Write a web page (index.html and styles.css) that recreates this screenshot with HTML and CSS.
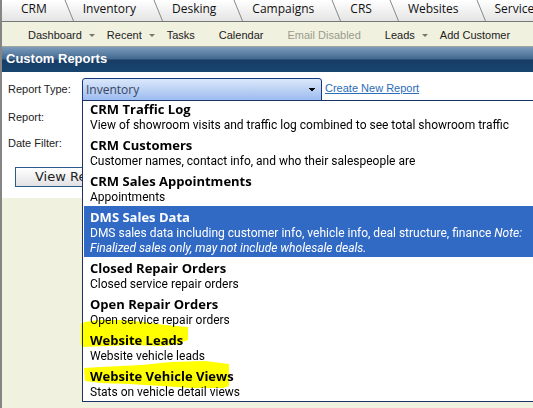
FILE: index.html
```
<!DOCTYPE html>
<html lang="en">
<head>
<meta charset="utf-8">
<title>Custom Reports</title>
<link rel="stylesheet" href="styles.css">
</head>
<body>
<nav class="tabs">
  <a class="tab" href="#">CRM</a>
  <a class="tab" href="#"><svg class="slant" viewBox="0 0 10 21"><path d="M1 0 9.500 21"/></svg>Inventory</a>
  <a class="tab" href="#"><svg class="slant" viewBox="0 0 10 21"><path d="M1 0 9.500 21"/></svg>Desking</a>
  <a class="tab" href="#"><svg class="slant" viewBox="0 0 10 21"><path d="M1 0 9.500 21"/></svg>Campaigns</a>
  <a class="tab" href="#"><svg class="slant" viewBox="0 0 10 21"><path d="M1 0 9.500 21"/></svg>CRS</a>
  <a class="tab" href="#"><svg class="slant" viewBox="0 0 10 21"><path d="M1 0 9.500 21"/></svg>Websites</a>
  <a class="tab" href="#"><svg class="slant" viewBox="0 0 10 21"><path d="M1 0 9.500 21"/></svg>Service</a>
</nav>
<nav class="subnav">
  <a class="sub has-menu" href="#">Dashboard</a>
  <a class="sub has-menu" href="#">Recent</a>
  <a class="sub" href="#">Tasks</a>
  <a class="sub" href="#">Calendar</a>
  <a class="sub disabled" href="#">Email Disabled</a>
  <a class="sub has-menu" href="#">Leads</a>
  <a class="sub" href="#">Add Customer</a>
</nav>
<h1 class="title">Custom Reports</h1>
<main class="panel">
  <div class="row type-row">
    <label class="label" for="type">Report Type:</label>
    <div class="combo">
      <select class="select" id="type"><option>Inventory</option></select>
      <ul class="menu">
        <li class="item"><b class="name">CRM Traffic Log</b><span class="desc">View of showroom visits and traffic log combined to see total showroom traffic</span></li>
        <li class="item"><b class="name">CRM Customers</b><span class="desc">Customer names, contact info, and who their salespeople are</span></li>
        <li class="item"><b class="name">CRM Sales Appointments</b><span class="desc">Appointments</span></li>
        <li class="item active"><b class="name">DMS Sales Data</b><span class="desc">DMS sales data including customer info, vehicle info, deal structure, finance <i>Note:<br>Finalized sales only, may not include wholesale deals.</i></span></li>
        <li class="item"><b class="name">Closed Repair Orders</b><span class="desc">Closed service repair orders</span></li>
        <li class="item"><b class="name">Open Repair Orders</b><span class="desc">Open service repair orders</span></li>
        <li class="item"><svg class="marker" viewBox="0 0 160 36"><path d="M0 5 4 3 18 1 40 1 62 3 84 6 107 8V21L101 23V25L80 27 50 26 2 28 0 25Z"/></svg><b class="name">Website Leads</b><span class="desc">Website vehicle leads</span></li>
        <li class="item"><svg class="marker" viewBox="0 0 160 36"><path d="M3 13 20 12 60 10 90 7 124 6 148 9V31L142 33 110 33 80 31 48 29 20 28 4 26Z"/></svg><b class="name">Website Vehicle Views</b><span class="desc">Stats on vehicle detail views</span></li>
      </ul>
    </div>
    <a class="create" href="#">Create New Report</a>
  </div>
  <div class="row">
    <span class="label">Report:</span>
  </div>
  <div class="row">
    <span class="label">Date Filter:</span>
  </div>
  <button class="view" type="button">View Report</button>
</main>
</body>
</html>
```
FILE: styles.css
```
* {
  box-sizing: border-box;
}

body {
  margin: 0;
  min-height: 100vh;
  overflow: hidden;
  border-left: 2px solid #858585;
  background: #f1f1df;
  font: 11px/14px "Liberation Sans", sans-serif;
  color: #222;
}

a {
  color: inherit;
  text-decoration: none;
  white-space: nowrap;
}

.tabs {
  display: flex;
  height: 22px;
  padding-left: 19px;
  border-bottom: 1px solid #777;
  background: linear-gradient(#fff, #e4e4e4);
  font: 12px/18px "Open Sans", sans-serif;
}

.tab {
  display: flex;
  padding-right: 17px;
  color: #111;
}

.slant {
  width: 10px;
  height: 21px;
  margin-right: 9px;
}

.slant path {
  fill: none;
  stroke: #888;
}

.subnav {
  display: flex;
  height: 25px;
  padding: 6px 0 0 26px;
  border-bottom: 1px solid #a3a69c;
}

.sub {
  margin-right: 24px;
}

.has-menu {
  display: flex;
  margin-right: 12px;
}

.has-menu::after {
  content: "";
  margin: 6px 0 0 7px;
  border: 3px solid transparent;
  border-top-color: #77776a;
  border-bottom: 0;
  height: 0;
}

.disabled {
  color: #999a8c;
}

.title {
  margin: 0;
  padding-left: 4px;
  height: 25px;
  background: linear-gradient(#7c9cbc 0, #41688f 48%, #173c65 52%, #17456f 100%);
  color: #fff;
  font: bold 13px/24px "Liberation Sans", sans-serif;
}

.panel {
  height: 126px;
  padding: 6px 0 0 6px;
  background: #fff;
}

.row {
  display: flex;
  height: 26px;
}

.type-row {
  height: 28px;
}

.label {
  width: 74px;
  padding-top: 4px;
}

.combo {
  position: relative;
  width: 240px;
}

.select {
  display: block;
  width: 100%;
  height: 23px;
  padding: 0 3px;
  appearance: none;
  border: 1px solid #16397e;
  border-radius: 3px 3px 0 0;
  background:
    linear-gradient(to bottom left, #000 50%, transparent 50%) right 9px center / 4px 4px no-repeat,
    linear-gradient(to bottom right, #000 50%, transparent 50%) right 5px center / 4px 4px no-repeat,
    linear-gradient(#dbe8fa, #9dbcf0);
  color: #3a4560;
  font: 12px/20px "Open Sans", sans-serif;
}

.create {
  padding: 3px 0 0 3px;
  color: #2a6db8;
  text-decoration: underline;
}

.menu {
  position: absolute;
  z-index: 1;
  top: 22px;
  left: 0;
  width: calc(100vw - 82px);
  margin: 0;
  padding: 0;
  border: 1px solid #1b3468;
  border-right: 0;
  background: #fff;
  color: #000;
  list-style: none;
  font: 12px/15px Roboto, sans-serif;
}

.item {
  position: relative;
  margin-left: 1px;
  padding: 2px 0 1px 6px;
  white-space: nowrap;
}

.item:first-child {
  padding-top: 0;
}

.name,
.desc {
  display: block;
}

.name {
  font-family: "Open Sans", sans-serif;
  font-size: 13px;
  line-height: 18px;
}

.item:first-child .name {
  line-height: 17px;
}

.active {
  background: #316ac5;
  color: #fff;
}

.marker {
  position: absolute;
  top: -10px;
  left: -3px;
  width: 160px;
  height: 36px;
  fill: #ff0;
  mix-blend-mode: multiply;
}

.view {
  display: block;
  height: 20px;
  margin: 9px 0 0 7px;
  padding: 0 19px;
  border: 1px solid #2c5a8c;
  background: linear-gradient(#fff, #e2e2e6);
  color: #222;
  font: 13px/18px "DejaVu Sans", sans-serif;
}
```
